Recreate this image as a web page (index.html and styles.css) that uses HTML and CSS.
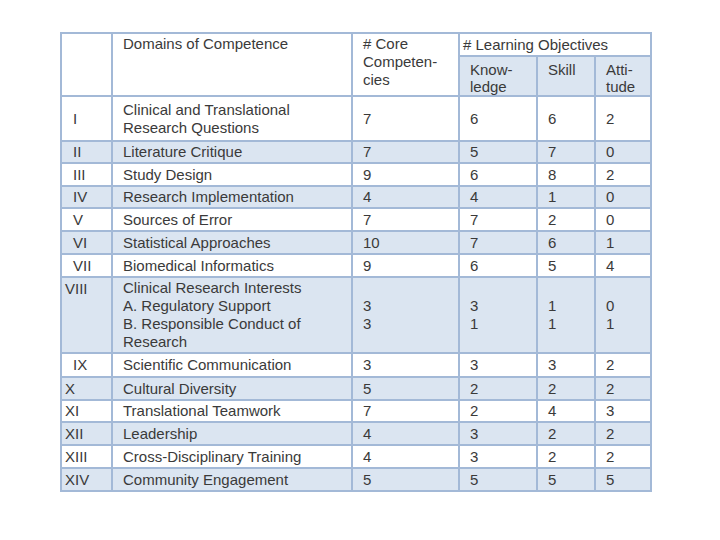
FILE: index.html
```html
<!DOCTYPE html>
<html>
<head>
<meta charset="utf-8">
<link rel="stylesheet" href="styles.css">
</head>
<body>
<div class="page">
<table class="comp">
<colgroup>
<col class="c1"><col class="c2"><col class="c3"><col class="c4"><col class="c5"><col class="c6">
</colgroup>
<thead>
<tr class="h1">
<th rowspan="2" class="top"></th>
<th rowspan="2" class="top">Domains of Competence</th>
<th rowspan="2" class="top"># Core<br>Competen-<br>cies</th>
<th colspan="3" class="lo"># Learning Objectives</th>
</tr>
<tr class="h2">
<th class="sub">Know-<br>ledge</th>
<th class="sub">Skill</th>
<th class="sub">Atti-<br>tude</th>
</tr>
</thead>
<tbody>
<tr class="h45 ind"><td>I</td><td>Clinical and Translational<br>Research Questions</td><td>7</td><td>6</td><td>6</td><td>2</td></tr>
<tr class="alt h22 ind"><td>II</td><td>Literature Critique</td><td>7</td><td>5</td><td>7</td><td>0</td></tr>
<tr class="h23 ind"><td>III</td><td>Study Design</td><td>9</td><td>6</td><td>8</td><td>2</td></tr>
<tr class="alt h22 ind"><td>IV</td><td>Research Implementation</td><td>4</td><td>4</td><td>1</td><td>0</td></tr>
<tr class="h23 ind"><td>V</td><td>Sources of Error</td><td>7</td><td>7</td><td>2</td><td>0</td></tr>
<tr class="alt h23 ind"><td>VI</td><td>Statistical Approaches</td><td>10</td><td>7</td><td>6</td><td>1</td></tr>
<tr class="h23 ind"><td>VII</td><td>Biomedical Informatics</td><td>9</td><td>6</td><td>5</td><td>4</td></tr>
<tr class="alt h76"><td class="top">VIII</td><td>Clinical Research Interests<br>A. Regulatory Support<br>B. Responsible Conduct of<br>Research</td><td>&nbsp;<br>3<br>3<br>&nbsp;</td><td>&nbsp;<br>3<br>1<br>&nbsp;</td><td>&nbsp;<br>1<br>1<br>&nbsp;</td><td>&nbsp;<br>0<br>1<br>&nbsp;</td></tr>
<tr class="h24 ind"><td>IX</td><td>Scientific Communication</td><td>3</td><td>3</td><td>3</td><td>2</td></tr>
<tr class="alt h23"><td>X</td><td>Cultural Diversity</td><td>5</td><td>2</td><td>2</td><td>2</td></tr>
<tr class="h22"><td>XI</td><td>Translational Teamwork</td><td>7</td><td>2</td><td>4</td><td>3</td></tr>
<tr class="alt h23"><td>XII</td><td>Leadership</td><td>4</td><td>3</td><td>2</td><td>2</td></tr>
<tr class="h23"><td>XIII</td><td>Cross-Disciplinary Training</td><td>4</td><td>3</td><td>2</td><td>2</td></tr>
<tr class="alt h23"><td>XIV</td><td>Community Engagement</td><td>5</td><td>5</td><td>5</td><td>5</td></tr>
</tbody>
</table>
</div>
</body>
</html>
```

FILE: styles.css
```css
html, body {
  margin: 0;
  padding: 0;
  background: #ffffff;
}

.page {
  padding: 32px 0 0 60px;
}

.comp {
  border-collapse: collapse;
  table-layout: fixed;
  width: 590px;
  font-family: "Liberation Sans", Arial, sans-serif;
  font-size: 15px;
  line-height: 18px;
  color: #3a3a3a;
}

.c1 { width: 51px; }
.c2 { width: 240px; }
.c3 { width: 107px; }
.c4 { width: 78px; }
.c5 { width: 58px; }
.c6 { width: 56px; }

.comp th,
.comp td {
  border: 2px solid #a3b9d7;
  padding: 0 4px 0 10px;
  text-align: left;
  font-weight: normal;
  vertical-align: middle;
  white-space: nowrap;
  overflow: hidden;
}

.comp td:first-child {
  padding-left: 3px;
  padding-right: 0;
}

.comp tr.ind td:first-child {
  padding-left: 11px;
}

.comp th.top {
  vertical-align: top;
  padding-top: 1px;
}

.comp th.lo {
  padding-left: 3px;
  vertical-align: middle;
}

.comp th.sub {
  vertical-align: top;
  padding-top: 4px;
  line-height: 17px;
  background: #dbe5f1;
}

.comp tr.h1 { height: 23px; }
.comp tr.h2 { height: 40px; }
.comp tr.h22 { height: 22px; }
.comp tr.h23 { height: 23px; }
.comp tr.h24 { height: 24px; }
.comp tr.h45 { height: 45px; }
.comp tr.h76 { height: 76px; }

.comp td.top {
  vertical-align: top;
  padding-top: 2px;
}

.comp tr.alt td {
  background: #dbe5f1;
}
```
